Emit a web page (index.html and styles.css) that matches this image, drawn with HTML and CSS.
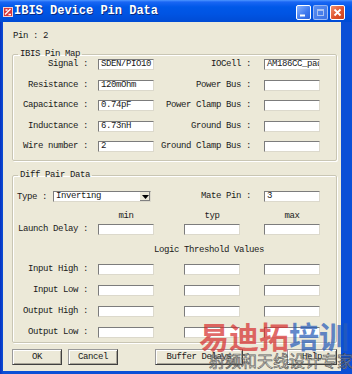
FILE: index.html
```html
<!DOCTYPE html>
<html lang="en">
<head>
	<meta charset="UTF-8">
	<title>IBIS Device Pin Data</title>
	<link rel="stylesheet" href="styles.css">
</head>
<body>
	<div class="window">
		<div class="titlebar">
			<svg class="app-icon" width="10" height="10" viewBox="0 0 10 10">
				<rect x="0.5" y="0.5" width="9" height="9" fill="#d8363a" stroke="#f4d0d0"/>
				<path d="M2 7.5 L7.5 2 M2.5 3 L4.5 3 M5.5 7.5 L8 7.5" stroke="#fff" stroke-width="1.4"/>
			</svg>
			<span class="title">IBIS Device Pin Data</span>
			<div class="caption-buttons">
				<span class="cbtn cbtn-min"><svg width="13" height="13" viewBox="0 0 13 13"><rect x="3" y="8.5" width="5" height="2" fill="#fff"/></svg></span>
				<span class="cbtn cbtn-max"><svg width="13" height="13" viewBox="0 0 13 13"><rect x="3.5" y="3.5" width="6" height="6" fill="none" stroke="#a9c2f2"/><rect x="3.5" y="3.5" width="6" height="1.5" fill="#a9c2f2"/></svg></span>
				<span class="cbtn cbtn-close"><svg width="13" height="13" viewBox="0 0 13 13"><path d="M3.5 3.5 L9.5 9.5 M9.5 3.5 L3.5 9.5" stroke="#fff" stroke-width="1.8"/></svg></span>
			</div>
		</div>

		<div class="frame">
			<div class="dialog">
				<div class="pin-line">Pin : 2</div>

				<fieldset class="group group-map">
					<legend>IBIS Pin Map</legend>
					<div class="map-grid">
						<span class="lbl">Signal :</span><div class="box">SDEN/PIO10</div>
						<span class="lbl lbl-r">IOCell :</span><div class="box">AM186CC_pad</div>

						<span class="lbl">Resistance :</span><div class="box">120mOhm</div>
						<span class="lbl lbl-r">Power Bus :</span><div class="box"></div>

						<span class="lbl">Capacitance :</span><div class="box">0.74pF</div>
						<span class="lbl lbl-r">Power Clamp Bus :</span><div class="box"></div>

						<span class="lbl">Inductance :</span><div class="box">6.73nH</div>
						<span class="lbl lbl-r">Ground Bus :</span><div class="box"></div>

						<span class="lbl">Wire number :</span><div class="box">2</div>
						<span class="lbl lbl-r">Ground Clamp Bus :</span><div class="box"></div>
					</div>
				</fieldset>

				<fieldset class="group group-diff">
					<legend>Diff Pair Data</legend>

					<div class="row row-type">
						<div class="type-cell">
							<span class="type-lbl">Type :</span>
							<div class="box combo">
								<span class="combo-text">Inverting</span>
								<span class="combo-btn"><svg width="7" height="4" viewBox="0 0 7 4"><path d="M0 0 H7 L3.5 4 Z" fill="#000"/></svg></span>
							</div>
						</div>
						<span class="lbl lbl-r">Mate Pin :</span>
						<div class="box">3</div>
					</div>

					<div class="row row-head">
						<span></span>
						<span class="col-head">min</span>
						<span class="col-head">typ</span>
						<span class="col-head">max</span>
					</div>

					<div class="row row-launch">
						<span class="lbl">Launch Delay :</span>
						<div class="box"></div>
						<div class="box"></div>
						<div class="box"></div>
					</div>

					<div class="logic-title">Logic Threshold Values</div>

					<div class="row row-logic">
						<span class="lbl">Input High :</span>
						<div class="box"></div><div class="box"></div><div class="box"></div>
					</div>
					<div class="row row-logic">
						<span class="lbl">Input Low :</span>
						<div class="box"></div><div class="box"></div><div class="box"></div>
					</div>
					<div class="row row-logic">
						<span class="lbl">Output High :</span>
						<div class="box"></div><div class="box"></div><div class="box"></div>
					</div>
					<div class="row row-logic">
						<span class="lbl">Output Low :</span>
						<div class="box"></div><div class="box"></div><div class="box"></div>
					</div>
				</fieldset>

				<div class="buttons">
					<button class="btn btn-ok">OK</button>
					<button class="btn btn-cancel">Cancel</button>
					<button class="btn btn-buffer">Buffer Delays</button>
					<button class="btn btn-help">Help</button>
				</div>
			</div>
		</div>

		<!-- watermark laid over the screenshot -->
		<div class="watermark">
			<div class="wm-big"><span class="wm-red">易迪拓</span><span class="wm-blue">培训</span></div>
			<div class="wm-small">射频和天线设计专家</div>
		</div>
	</div>
</body>
</html>
```

FILE: styles.css
```css
* {
    margin: 0;
    padding: 0;
    box-sizing: border-box;
}
body {
    width: 352px;
    height: 374px;
    overflow: hidden;
    background: #0b4fd6;
    font-family: "Liberation Mono", "DejaVu Sans Mono", monospace;
    font-size: 9px;
    letter-spacing: -0.4px;
    color: #1a1a1a;
}
.window {
    position: relative;
    width: 352px;
    height: 374px;
    display: flex;
    flex-direction: column;
}

/* title bar */
.titlebar {
    height: 22px;
    display: flex;
    align-items: center;
    padding-left: 3px;
    background: linear-gradient(180deg, #4d96ff 0, #1a66f4 2px, #0058e8 7px, #0054e3 14px, #004bd4 22px);
}
.app-icon {
    margin-top: 1px;
}
.title {
    margin-left: 1px;
    font-size: 12px;
    font-weight: bold;
    letter-spacing: 0;
    color: #fff;
    text-shadow: 1px 1px 0 #0a2a80;
}
.caption-buttons {
    margin-left: auto;
    margin-right: 7px;
    margin-top: 3px;
    display: flex;
    gap: 2px;
}
.cbtn {
    width: 15px;
    height: 15px;
    border: 1px solid #fff;
    border-radius: 2px;
    display: flex;
    align-items: center;
    justify-content: center;
}
.cbtn-min {
    background: linear-gradient(135deg, #8ab4ff, #3d78ee 60%, #2a62dc);
}
.cbtn-max {
    border-color: rgba(255, 255, 255, 0.45);
    background: linear-gradient(135deg, #5a8ef0, #3a72e6);
}
.cbtn-close {
    background: linear-gradient(135deg, #f09070, #e0532c 55%, #c8401c);
}

/* dialog body */
.frame {
    flex: 1;
    padding: 0 11px 3px 3px;
    background: linear-gradient(90deg, #0831c0 0, #0b4fd6 3px);
}
.dialog {
    height: 100%;
    background: #ece9d8;
    padding: 9px 4px 0 9px;
}
.pin-line {
    height: 10px;
    line-height: 10px;
    padding-left: 1px;
}

.group {
    border: 1px solid #c9c6b4;
    box-shadow: inset 1px 1px 0 #fff, 1px 1px 0 #fff;
    border-radius: 2px;
}
.group legend {
    margin-left: 5px;
    padding: 0 2px;
    line-height: 9px;
}
.group-map {
    margin-top: 9px;
    padding: 0 0 8px 0;
}
.group-diff {
    margin-top: 10px;
    padding: 11px 0 4px 0;
}

.map-grid {
    display: grid;
    grid-template-columns: 85px 56px 110px 56px;
    grid-auto-rows: 11px;
    row-gap: 9.5px;
    align-items: center;
}
.lbl {
    text-align: right;
    padding-right: 10px;
    white-space: nowrap;
    line-height: 11px;
}
.lbl-r {
    padding-right: 13px;
}
.box {
    height: 11px;
    background: #fff;
    border: 1px solid;
    border-color: #7c7c7c #dcd9cc #dcd9cc #7c7c7c;
    line-height: 9px;
    padding-left: 2px;
    overflow: hidden;
    white-space: nowrap;
}

/* diff pair rows */
.row {
    display: grid;
    grid-template-columns: 85px 86px 80px 56px;
    align-items: center;
}
.row .box {
    width: 56px;
}
.row-type {
    height: 11px;
}
.type-cell {
    grid-column: 1 / 3;
    display: flex;
    align-items: center;
    padding-left: 4px;
}
.type-lbl {
    width: 36px;
}
.row .combo {
    width: 98px;
    display: flex;
    padding-left: 2px;
    padding-right: 0;
}
.combo-text {
    flex: 1;
}
.combo-btn {
    width: 11px;
    height: 9px;
    background: #ece9d8;
    border-left: 1px solid #fff;
    box-shadow: inset -1px -1px 0 #808080;
    display: flex;
    align-items: center;
    justify-content: center;
}
.row-head {
    margin-top: 9px;
    height: 10px;
    line-height: 10px;
}
.col-head {
    width: 56px;
    text-align: center;
}
.row-launch {
    margin-top: 3px;
    height: 11px;
}
.logic-title {
    margin-top: 10px;
    padding-left: 141px;
    height: 10px;
    line-height: 10px;
}
.row-logic {
    margin-top: 10px;
    height: 11px;
}
.logic-title + .row-logic {
    margin-top: 9px;
}

/* bottom buttons */
.buttons {
    margin-top: 6px;
    display: flex;
    padding-left: 0;
}
.btn {
    height: 16px;
    font-family: inherit;
    font-size: 9px;
    letter-spacing: -0.4px;
    color: #1a1a1a;
    background: #ece9d8;
    border: 1px solid;
    border-color: #9a9a9a #404040 #404040 #9a9a9a;
    box-shadow: inset 1px 1px 0 #fff, inset -1px -1px 0 #a8a598;
}
.btn-ok {
    width: 50px;
}
.btn-cancel {
    width: 50px;
    margin-left: 6px;
}
.btn-buffer {
    width: 88px;
    margin-left: 37px;
}
.btn-help {
    width: 50px;
    margin-left: 44px;
}

/* watermark */
.watermark {
    position: absolute;
    left: 199px;
    top: 319px;
    font-family: "Noto Sans CJK SC", sans-serif;
    letter-spacing: 0;
    pointer-events: none;
}
.wm-big {
    font-size: 30px;
    font-weight: bold;
    line-height: 32px;
    white-space: nowrap;
}
.wm-red {
    color: rgba(214, 48, 48, 0.72);
}
.wm-blue {
    color: rgba(40, 92, 184, 0.72);
}
.wm-small {
    margin-left: 10px;
    font-size: 16px;
    line-height: 18px;
    white-space: nowrap;
    color: rgba(255, 255, 255, 0.35);
    -webkit-text-stroke: 0.7px rgba(70, 70, 70, 0.85);
}
```
